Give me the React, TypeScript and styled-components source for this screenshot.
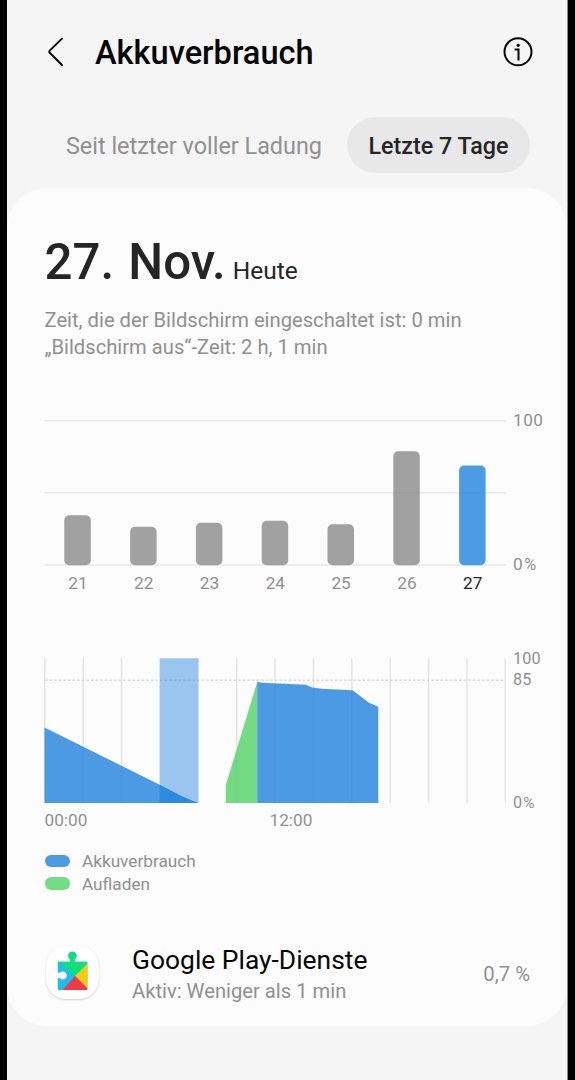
import React from 'react';
import styled, { createGlobalStyle } from 'styled-components';

const GlobalStyle = createGlobalStyle`
  * { box-sizing: border-box; }
  body {
    margin: 0;
    background: #000;
    font-family: Roboto, "Noto Sans", sans-serif;
  }
`;

const BLUE = '#2182df';
const GREEN = '#50d366';
const GREY = '#898989';

const Screen = styled.main`
  height: 1080px;
  margin: 0 7px;
  background: #f5f5f5;
  border-right: 1px solid #8a8a8a;
  overflow: hidden;
`;

const Header = styled.header`
  display: flex;
  align-items: center;
  height: 73px;
  padding: 33px 34.5px 0 39px;
`;

const Title = styled.h1`
  flex: 1;
  margin: 0 0 0 26px;
  font-size: 32.6px;
  font-weight: 500;
  line-height: 40px;
  color: #060606;
`;

const IconButton = styled.button`
  display: flex;
  padding: 0;
  border: 0;
  background: none;
  color: #060606;
`;

const Tabs = styled.nav`
  display: flex;
  justify-content: flex-end;
  margin-top: 44px;
  padding-right: 37px;
`;

const Tab = styled.button<{ $active?: boolean }>`
  height: 56px;
  padding: 2px ${p => (p.$active ? '0' : '25px')} 0 ${p => (p.$active ? '0' : '21px')};
  width: ${p => (p.$active ? '183px' : 'auto')};
  border: 0;
  border-radius: 28px;
  background: ${p => (p.$active ? '#e8e8e8' : 'transparent')};
  color: ${p => (p.$active ? '#252525' : '#909090')};
  font-family: inherit;
  font-size: ${p => (p.$active ? '23.3px' : '23.4px')};
  font-weight: ${p => (p.$active ? 500 : 400)};
  white-space: nowrap;
`;

const Card = styled.section`
  height: 838px;
  margin-top: 15px;
  padding: 43.5px 0 0 37px;
  border-radius: 40px;
  background: #fcfcfc;
`;

const DateHeading = styled.h2`
  height: 60px;
  margin: 0 0 0 0.5px;
  font-size: 49.2px;
  font-weight: 500;
  line-height: 60px;
  word-spacing: 2px;
  color: #252525;
  white-space: nowrap;
`;

const Today = styled.span`
  margin-left: 7px;
  font-size: 24.5px;
  font-weight: 400;
  line-height: 1;
`;

const Summary = styled.p`
  margin: 15px 0 0 0.5px;
  font-size: 20.2px;
  line-height: 27.5px;
  color: #909090;
`;

const Chart = styled.div<{ $top: number }>`
  display: flex;
  margin-top: ${p => p.$top}px;
`;

const Plot = styled.div`
  width: 462px;
  padding-top: 10px;
  svg { display: block; }
`;

const Axis = styled.div<{ $size: number; $spacing: number }>`
  display: flex;
  flex-direction: column;
  height: 165px;
  margin-left: 7px;
  font-size: ${p => p.$size}px;
  letter-spacing: ${p => p.$spacing}px;
  line-height: 20px;
  color: #909090;
`;

const AxisLabel = styled.span<{ $gap?: number; $last?: boolean }>`
  margin-top: ${p => (p.$last ? 'auto' : `${p.$gap ?? 0}px`)};
`;

const Percent = styled.span`
  margin-left: 1px;
  font-size: 0.95em;
`;

const DayLabels = styled.div`
  display: grid;
  grid-template-columns: repeat(7, 65.8px);
  margin: 7px 0 0 1px;
  font-size: 17.2px;
  line-height: 20px;
  text-align: center;
`;

const DayLabel = styled.span<{ $current: boolean }>`
  color: ${p => (p.$current ? '#252525' : '#909090')};
`;

const TimeLabels = styled.div`
  display: grid;
  grid-template-columns: 225px auto;
  margin: 6px 0 0 0.5px;
  font-size: 17.2px;
  line-height: 20px;
  color: #909090;
`;

const Legend = styled.ul`
  margin: 20px 0 0;
  padding: 0;
  list-style: none;
`;

const LegendItem = styled.li`
  display: flex;
  align-items: center;
  gap: 12.5px;
  font-size: 17.2px;
  line-height: 22.8px;
  color: #909090;
`;

const Swatch = styled.i<{ $color: string }>`
  width: 25px;
  height: 12.5px;
  margin: -1px 0 0 0.5px;
  border-radius: 6.25px;
  background: ${p => p.$color};
  opacity: 0.8;
`;

const AppRow = styled.div`
  display: flex;
  align-items: center;
  margin-top: 48px;
  padding-right: 37px;
`;

const AppIcon = styled.div`
  width: 53px;
  height: 53px;
  margin: 0 0 3px 2px;
  border-radius: 20px;
  background: #fff;
  box-shadow: 0 1px 2px rgba(0, 0, 0, 0.16), 0 0 1px rgba(0, 0, 0, 0.08);
  svg { display: block; }
`;

const AppText = styled.div`
  flex: 1;
  margin-left: 33px;
`;

const AppName = styled.div`
  font-size: 26.4px;
  line-height: 32px;
  color: #060606;
`;

const AppDetail = styled.div`
  margin-top: 2px;
  font-size: 20.2px;
  line-height: 26px;
  color: #909090;
`;

const Share = styled.span`
  font-size: 20.3px;
  line-height: 26px;
  color: #909090;
`;

const days = [
  { day: 21, top: 515.3 },
  { day: 22, top: 526.8 },
  { day: 23, top: 522.8 },
  { day: 24, top: 520.8 },
  { day: 25, top: 524.3 },
  { day: 26, top: 451.2 },
  { day: 27, top: 465.5 },
];

function WeekPlot() {
  return (
    <svg width="462" height="146" viewBox="44 420 462 146">
      {[420.8, 492.8, 565].map(y => (
        <line key={y} x1="44.5" x2="505.5" y1={y} y2={y} stroke="#e8e8e8" strokeWidth="1.6" />
      ))}
      {days.map(({ day, top }, i) => (
        <rect
          key={day}
          x={64.3 + i * 65.8}
          y={top}
          width="26.5"
          height={565.2 - top}
          rx="5"
          fill={day === 27 ? BLUE : GREY}
          opacity="0.8"
        />
      ))}
    </svg>
  );
}

/* Two-hour grid lines; the highlighted band covers the two at 06:00 and 08:00. */
const hourLines = [0, 1, 2, 5, 6, 7, 8, 9, 10, 11, 12].map(i => 44.8 + i * 38.38);

function DayPlot() {
  return (
    <svg width="462" height="146" viewBox="44 658 462 146">
      {hourLines.map(x => (
        <line key={x} x1={x} x2={x} y1="658.5" y2="803" stroke="#e5e5e5" strokeWidth="1.6" />
      ))}
      <line x1="45" x2="505" y1="680.3" y2="680.3" stroke="#dcdcdc" strokeWidth="1.5" strokeDasharray="2.6 2" />
      <rect x="159.6" y="658.3" width="38.9" height="144.7" fill={BLUE} opacity="0.45" />
      <g opacity="0.8">
        <path d="M44.5 727.5L159.7 784.7L181.7 796.3L198 803H44.5Z" fill={BLUE} />
        <path d="M225.8 785L257.2 682V803H225.8Z" fill={GREEN} />
        <path d="M257.2 681.8L262 682.8L306 684.7L312 687.6L322 688.8L352.5 690.3L369 702.8L378.3 706.8V803H257.2Z" fill={BLUE} />
      </g>
      <path d="M159.6 784.7L181.7 796.3L198 803H159.6Z" fill={BLUE} opacity="0.4" />
    </svg>
  );
}

function PlayServicesIcon() {
  return (
    <svg width="53" height="53" viewBox="46 945.5 53 53">
      <defs>
        <clipPath id="puzzle">
          <path d="M59 961.2H70.1V958.8A4.2 4.2 0 1 1 74.7 958.8V961.2H86.2A1.2 1.2 0 0 1 87.4 962.4V988.2A1.2 1.2 0 0 1 86.2 989.4H59A1.2 1.2 0 0 1 57.8 988.2V977.6H59.7A4 4 0 1 0 59.7 972.2H57.8V962.4A1.2 1.2 0 0 1 59 961.2Z" />
        </clipPath>
      </defs>
      <g clipPath="url(#puzzle)">
        <rect x="56" y="950" width="34" height="42" fill="#1fbcf2" />
        <path d="M57.8 961.2L75 975.6L90 960.5V950H57.8Z" fill="#10e07c" />
        <path d="M75 975.6L90 960.5V990.5Z" fill="#fcc90c" />
        <path d="M75 975.6L61 991H90.5Z" fill="#f03a4a" />
      </g>
    </svg>
  );
}

export default function App() {
  return (
    <>
      <GlobalStyle />
      <Screen>
        <Header>
          <IconButton aria-label="Zurück">
            <svg width="23" height="34" viewBox="46 36 23 34" fill="none" stroke="currentColor" strokeWidth="2" strokeLinecap="round" strokeLinejoin="round">
              <path d="M62 38.6L49.7 50.6Q48.7 51.7 49.7 52.8L62 65" />
            </svg>
          </IconButton>
          <Title>Akkuverbrauch</Title>
          <IconButton aria-label="Info">
            <svg width="30" height="32" viewBox="503 37 30 32" fill="none" stroke="currentColor" strokeWidth="2">
              <circle cx="518" cy="51.8" r="13.5" />
              <path d="M514.6 49.4H518.5V60.4" />
              <circle cx="518.2" cy="45.3" r="1.6" fill="currentColor" stroke="none" />
            </svg>
          </IconButton>
        </Header>
        <Tabs>
          <Tab>Seit letzter voller Ladung</Tab>
          <Tab $active>Letzte 7 Tage</Tab>
        </Tabs>
        <Card>
          <DateHeading>27. Nov.<Today>Heute</Today></DateHeading>
          <Summary>
            Zeit, die der Bildschirm eingeschaltet ist: 0 min
            <br />
            „Bildschirm aus“-Zeit: 2 h, 1 min
          </Summary>
          <Chart $top={48.5}>
            <Plot>
              <WeekPlot />
              <DayLabels>
                {days.map(({ day }) => (
                  <DayLabel key={day} $current={day === 27}>{day}</DayLabel>
                ))}
              </DayLabels>
            </Plot>
            <Axis $size={17.2} $spacing={0.5}>
              <AxisLabel>100</AxisLabel>
              <AxisLabel $last>0<Percent>%</Percent></AxisLabel>
            </Axis>
          </Chart>
          <Chart $top={55}>
            <Plot>
              <DayPlot />
              <TimeLabels>
                <span>00:00</span>
                <span>12:00</span>
              </TimeLabels>
            </Plot>
            <Axis $size={16.2} $spacing={0.2}>
              <AxisLabel $gap={0.6}>100</AxisLabel>
              <AxisLabel $gap={1.8}>85</AxisLabel>
              <AxisLabel $last>0<Percent>%</Percent></AxisLabel>
            </Axis>
          </Chart>
          <Legend>
            <LegendItem><Swatch $color={BLUE} />Akkuverbrauch</LegendItem>
            <LegendItem><Swatch $color={GREEN} />Aufladen</LegendItem>
          </Legend>
          <AppRow>
            <AppIcon><PlayServicesIcon /></AppIcon>
            <AppText>
              <AppName>Google Play-Dienste</AppName>
              <AppDetail>Aktiv: Weniger als 1 min</AppDetail>
            </AppText>
            <Share>0,7 %</Share>
          </AppRow>
        </Card>
      </Screen>
    </>
  );
}
